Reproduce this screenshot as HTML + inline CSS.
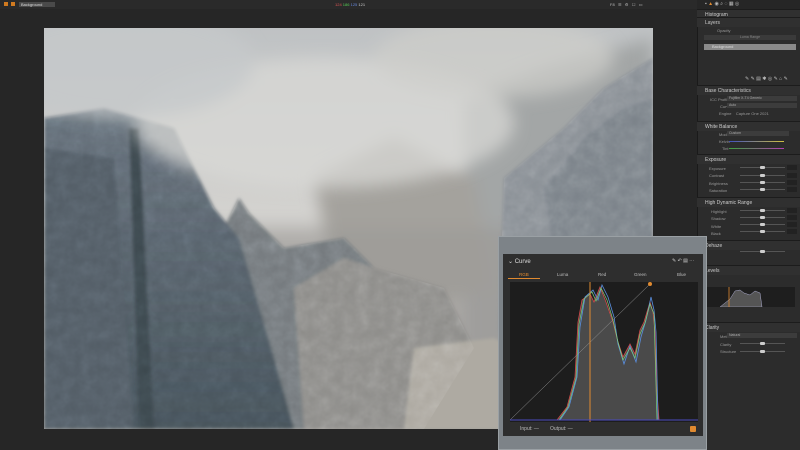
<!DOCTYPE html>
<html><head><meta charset="utf-8"><style>
*{margin:0;padding:0;box-sizing:border-box}
body{width:800px;height:450px;background:#262626;font-family:"Liberation Sans",sans-serif;overflow:hidden;position:relative;color:#aaa}
.a{position:absolute}
.rp{left:697px;top:0;width:103px;height:450px;background:#2c2c2c;border-left:1px solid #1a1a1a}
.hd{position:absolute;left:697px;width:103px;height:10px;background:#303030;font-size:5px;color:#ccc;padding:2px 0 0 8px;border-top:1px solid #1c1c1c}
.row{position:absolute;left:697px;width:103px;font-size:4px;color:#999}
.sl{position:absolute;left:740px;width:45px;height:1px;background:#555}
.sl::after{content:"";position:absolute;left:20px;top:-1px;width:5px;height:3px;background:#ccc;border-radius:1px}
.bx{position:absolute;left:787px;width:10px;height:5px;background:#222}
</style></head><body>
<!-- top bar -->
<div class="a" style="left:0;top:0;width:800px;height:9px;background:#2a2a2a"></div>
<div class="a" style="left:4px;top:2px;width:4px;height:4px;background:#d07a20"></div>
<div class="a" style="left:11px;top:2px;width:4px;height:4px;background:#d07a20"></div>
<div class="a" style="left:19px;top:2px;width:36px;height:5px;background:#4a4a4a;font-size:4px;color:#ddd;padding-left:2px">Background</div>
<div class="a" style="left:335px;top:2px;font-size:4px;color:#d55">124 <span style="color:#5c5">186</span> <span style="color:#68d">125</span> <span style="color:#ccc">121</span></div>
<div class="a" style="left:610px;top:2px;font-size:4px;color:#bbb">F8 &nbsp; ☰ &nbsp; ⚙ &nbsp; ☐ &nbsp; ▭</div>
<!-- photo -->
<svg class="a" style="left:44px;top:28px" width="609" height="401" viewBox="0 0 609 401">
<defs>
<filter id="b"><feGaussianBlur stdDeviation="8"/></filter>
<filter id="b2"><feGaussianBlur stdDeviation="1.5"/></filter>
<filter id="n"><feTurbulence type="fractalNoise" baseFrequency="0.08" numOctaves="3" seed="3"/><feColorMatrix type="saturate" values="0"/></filter>
<linearGradient id="fog" x1="0" y1="0" x2="0" y2="1"><stop offset="0" stop-color="#bfc2c4"/><stop offset="0.45" stop-color="#d3d2cf"/><stop offset="1" stop-color="#a9a6a1"/></linearGradient>
<linearGradient id="rk" x1="0" y1="0" x2="0" y2="1"><stop offset="0" stop-color="#66707a"/><stop offset="1" stop-color="#46525a"/></linearGradient>
<clipPath id="rc"><path d="M0 90 L60 80 L130 100 L170 180 L195 210 L230 330 L250 401 L0 401 Z M180 200 L195 170 L205 185 L240 220 L300 210 L330 240 L360 300 L330 401 L150 401 Z M460 150 L520 100 L560 60 L609 30 L609 401 L470 401 L455 300 Z M250 260 L300 230 L330 240 L400 260 L430 320 L380 401 L260 401 Z"/></clipPath>
</defs>
<rect width="609" height="401" fill="url(#fog)"/>
<g filter="url(#b)">
<path d="M420 70 L500 40 L609 10 L609 330 L420 330 Z" fill="#a3a6a6"/>
<path d="M270 150 L350 110 L430 150 L450 260 L300 300 Z" fill="#a4a29d"/>
<path d="M0 200 L609 200 L609 401 L0 401 Z" fill="#9c9a96" opacity=".6"/>
</g>
<g filter="url(#b2)">
<path d="M180 200 L195 170 L205 185 L240 220 L300 210 L330 240 L360 300 L330 401 L150 401 Z" fill="#747a7e"/>
<path d="M460 150 L520 100 L560 60 L609 30 L609 401 L470 401 L455 300 Z" fill="#8a9096"/>
<path d="M500 160 L540 110 L580 80 L609 70 L609 300 L520 290 Z" fill="#7b838a"/>
<path d="M250 260 L300 230 L330 240 L400 260 L430 320 L380 401 L260 401 Z" fill="#8e8d8a"/>
<path d="M370 320 L450 310 L520 350 L540 401 L360 401 Z" fill="#aeaaa2"/>
<path d="M0 90 L60 80 L130 100 L170 180 L195 210 L230 330 L250 401 L0 401 Z" fill="url(#rk)"/>
<path d="M0 120 L70 130 L90 401 L0 401 Z" fill="#525d66"/>
<path d="M85 100 L95 100 L110 401 L95 401 Z" fill="#3e4950"/>
</g>
<rect width="609" height="401" filter="url(#n)" clip-path="url(#rc)" opacity=".28" style="mix-blend-mode:overlay"/>
<g filter="url(#b)"><ellipse cx="280" cy="95" rx="190" ry="65" fill="#d8d8d6" opacity=".75"/><ellipse cx="80" cy="35" rx="130" ry="55" fill="#c6c9cb" opacity=".8"/><ellipse cx="450" cy="30" rx="120" ry="40" fill="#cfcecb" opacity=".7"/></g>
</svg>
<!-- right panel -->
<div class="a rp"></div>
<div class="a" style="left:697px;top:0;width:103px;height:9px;background:#262626;font-size:5px;color:#bbb;padding:1px 0 0 8px">▪ <span style="color:#e08a30">▲</span> ◉ ⌕ ◌ ▦ ◎</div>
<div class="hd" style="top:9px">Histogram</div>
<div class="hd" style="top:17px">Layers</div>
<div class="row" style="top:28px;padding-left:20px">Opacity</div>
<div class="a" style="left:704px;top:35px;width:92px;height:5px;background:#3a3a3a;font-size:3.5px;color:#888;text-align:center">Luma Range</div>
<div class="a" style="left:704px;top:44px;width:92px;height:6px;background:#8a8a8a;font-size:4px;color:#ddd;padding-left:8px">Background</div>
<div class="a" style="left:745px;top:76px;font-size:5px;color:#bbb">✎ ✎ ▤ ✱ ◎ ✎ ⌂ ✎</div>
<div class="hd" style="top:85px">Base Characteristics</div>
<div class="row" style="top:97px;padding-left:13px">ICC Profile</div><div class="a" style="left:727px;top:96px;width:70px;height:5px;background:#3c3c3c;font-size:3.5px;color:#aaa;padding-left:2px">Fujifilm X-T4 Generic</div>
<div class="row" style="top:104px;padding-left:23px">Curve</div><div class="a" style="left:727px;top:103px;width:70px;height:5px;background:#3c3c3c;font-size:3.5px;color:#aaa;padding-left:2px">Auto</div>
<div class="row" style="top:111px;padding-left:22px">Engine &nbsp;&nbsp; Capture One 2021</div>
<div class="hd" style="top:121px">White Balance</div>
<div class="row" style="top:132px;padding-left:22px">Mode</div><div class="a" style="left:727px;top:131px;width:62px;height:5px;background:#3c3c3c;font-size:3.5px;color:#aaa;padding-left:2px">Custom</div>
<div class="row" style="top:139px;padding-left:22px">Kelvin</div><div class="a" style="left:729px;top:141px;width:55px;height:1px;background:linear-gradient(90deg,#4050c0,#d0c040)"></div>
<div class="row" style="top:146px;padding-left:25px">Tint</div><div class="a" style="left:729px;top:148px;width:55px;height:1px;background:linear-gradient(90deg,#40a040,#b040b0)"></div>
<div class="hd" style="top:154px">Exposure</div>
<div class="row" style="top:165px;padding-left:12px;line-height:7.3px">Exposure<br>Contrast<br>Brightness<br>Saturation</div>
<div class="hd" style="top:197px">High Dynamic Range</div>
<div class="row" style="top:208px;padding-left:14px;line-height:7.3px">Highlight<br>Shadow<br>White<br>Black</div>
<div class="hd" style="top:240px">Dehaze</div>
<div class="hd" style="top:265px">Levels</div>
<div class="a" style="left:705px;top:287px;width:90px;height:20px;background:#1e1e1e"></div>
<svg class="a" style="left:710px;top:287px" width="70" height="20"><path d="M10 20 L20 12 L25 4 L30 3 L34 6 L40 8 L45 4 L50 6 L52 20 Z" fill="#555" stroke="#aac" stroke-width=".5"/><line x1="19" y1="0" x2="19" y2="20" stroke="#e08a30" stroke-width=".8"/></svg>
<div class="hd" style="top:322px">Clarity</div>
<div class="row" style="top:334px;padding-left:23px">Method</div><div class="a" style="left:727px;top:333px;width:70px;height:5px;background:#3c3c3c;font-size:3.5px;color:#aaa;padding-left:2px">Natural</div>
<div class="row" style="top:341px;padding-left:23px;line-height:7.3px">Clarity<br>Structure</div>
<div class="sl" style="top:167px"></div><div class="sl" style="top:175px"></div><div class="sl" style="top:182px"></div><div class="sl" style="top:189px"></div>
<div class="sl" style="top:210px"></div><div class="sl" style="top:217px"></div><div class="sl" style="top:224px"></div><div class="sl" style="top:231px"></div>
<div class="sl" style="top:251px"></div><div class="sl" style="top:343px"></div><div class="sl" style="top:351px"></div>
<div class="bx" style="top:165px"></div><div class="bx" style="top:173px"></div><div class="bx" style="top:180px"></div><div class="bx" style="top:187px"></div>
<div class="bx" style="top:208px"></div><div class="bx" style="top:215px"></div><div class="bx" style="top:222px"></div><div class="bx" style="top:229px"></div>
<!-- curve floating panel (on top) -->
<div class="a" style="left:498px;top:236px;width:209px;height:214px;background:#7d8388;border:1px solid #9aa0a4"></div>
<div class="a" style="left:503px;top:254px;width:200px;height:182px;background:#2e2e2e"></div>
<div class="a" style="left:508px;top:258px;font-size:6px;color:#ddd">⌄ Curve</div>
<div class="a" style="left:672px;top:258px;font-size:5px;color:#ccc">✎ ↶ ▤ ⋯</div>
<div class="a" style="left:519px;top:272px;font-size:4.5px;color:#e08a30">RGB</div>
<div class="a" style="left:508px;top:278px;width:32px;height:1px;background:#e08a30"></div>
<div class="a" style="left:557px;top:272px;font-size:4.5px;color:#bbb">Luma</div>
<div class="a" style="left:598px;top:272px;font-size:4.5px;color:#bbb">Red</div>
<div class="a" style="left:634px;top:272px;font-size:4.5px;color:#bbb">Green</div>
<div class="a" style="left:677px;top:272px;font-size:4.5px;color:#bbb">Blue</div>
<svg class="a" style="left:510px;top:282px" width="188" height="140" viewBox="0 0 188 140">
<rect width="188" height="140" fill="#1d1d1d"/>
<path d="M47 138 L57 125 L65 95 L68 40 L72 18 L80 12 L84 20 L90 5 L96 20 L103 40 L108 60 L113 75 L120 62 L125 72 L130 48 L134 40 L140 20 L143 30 L145 50 L147 110 L149 138 Z" fill="#4a4a4a"/>
<path d="M47 138 L57 125 L65 95 L68 40 L72 18 L80 12 L84 20 L90 5 L96 20 L103 40 L108 60 L113 75 L120 62 L125 72 L130 48 L134 40 L140 20 L143 30 L145 50 L147 110 L149 138" fill="none" stroke="#d24a4a" stroke-width="0.8"/>
<path d="M50 138 L59 125 L67 95 L70 45 L75 15 L83 8 L88 18 L92 3 L98 15 L104 35 L108 62 L114 82 L120 64 L126 80 L131 55 L136 38 L141 15 L144 28 L146 50 L148 138" fill="none" stroke="#5a8fe0" stroke-width="0.8"/>
<path d="M49 138 L58 125 L66 96 L69 42 L74 17 L82 10 L86 19 L91 6 L97 18 L103 38 L108 60 L113 78 L120 66 L125 76 L130 52 L135 41 L140 22 L144 32 L147 138" fill="none" stroke="#7cd07c" stroke-width="0.7"/>
<line x1="0" y1="138" x2="140" y2="2" stroke="#999" stroke-width="0.5"/>
<line x1="80" y1="0" x2="80" y2="140" stroke="#e08a30" stroke-width="1"/>
<line x1="0" y1="138" x2="188" y2="138" stroke="#4a4ac0" stroke-width="1"/>
<circle cx="140" cy="2" r="2" fill="#e08a30"/>
</svg>
<div class="a" style="left:520px;top:426px;font-size:5px;color:#bbb">Input: — &nbsp;&nbsp;&nbsp;&nbsp;&nbsp;&nbsp; Output: —</div>
<div class="a" style="left:690px;top:426px;width:6px;height:6px;background:#e08a30;border-radius:1px"></div>
</body></html>
